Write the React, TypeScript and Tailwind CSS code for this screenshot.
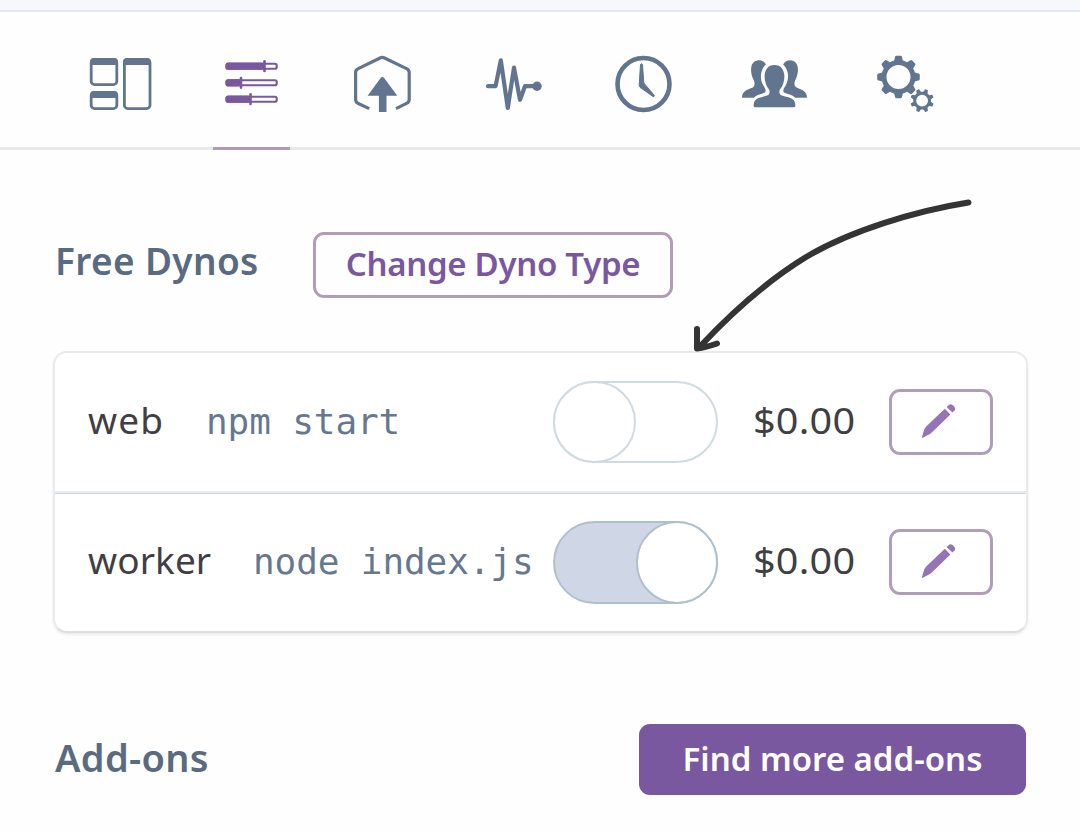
import type { ReactNode } from "react";

const SLATE = "#62758f";
const PURPLE = "#79589f";

function TabIcon({ x, children }: { x: number; children: ReactNode }) {
  return (
    <svg width="77" height="90" viewBox={`${x} 40 77 90`} fill="none" className="block">
      {children}
    </svg>
  );
}

function gearPath(cx: number, cy: number, outer: number, body: number, hole: number, offset: number) {
  const pt = (r: number, deg: number) => {
    const a = (deg * Math.PI) / 180;
    return `${(cx + r * Math.cos(a)).toFixed(2)} ${(cy + r * Math.sin(a)).toFixed(2)}`;
  };
  let d = "";
  for (let i = 0; i < 8; i++) {
    const c = offset + i * 45;
    d += `${i ? "L" : "M"}${pt(body, c - 15)}L${pt(outer - 1.4, c - 10)}Q${pt(outer, c - 9.5)} ${pt(outer, c - 6)}L${pt(outer, c + 6)}Q${pt(outer, c + 9.5)} ${pt(outer - 1.4, c + 10)}L${pt(body, c + 15)}A${body} ${body} 0 0 1 ${pt(body, c + 30)}`;
  }
  return `${d}ZM${cx - hole} ${cy}a${hole} ${hole} 0 1 0 ${hole * 2} 0a${hole} ${hole} 0 1 0 ${-hole * 2} 0Z`;
}

function Overview() {
  return (
    <TabIcon x={82}>
      <g stroke={SLATE} strokeWidth="2.8">
        <rect x="91.2" y="59.4" width="25.6" height="25.2" rx="3.4" />
        <rect x="91.2" y="92.4" width="25.6" height="16.2" rx="3.4" />
        <rect x="124.4" y="59.4" width="25.6" height="49.2" rx="3.4" />
      </g>
      <path fill={SLATE} d="M90 65v-3q0-4 4-4h20q4 0 4 4v3zM90 98v-3q0-4 4-4h20q4 0 4 4v3zM123 65v-3q0-4 4-4h20q4 0 4 4v3z" />
    </TabIcon>
  );
}

function Resources() {
  const rows = [
    { y: 66.2, k: 264.5 },
    { y: 82.8, k: 241 },
    { y: 99.2, k: 250.5 },
  ];
  return (
    <TabIcon x={213}>
      {rows.map(({ y, k }) => (
        <g key={y}>
          <rect x="226.5" y={y - 2.5} width="50.2" height="5" rx="1.8" stroke={PURPLE} strokeWidth="2.1" />
          <rect x="225.5" y={y - 3.6} width={k - 225.5} height="7.2" rx="2.5" fill={PURPLE} />
          <path d={`M${k} ${y - 4.8}v9.6`} stroke={PURPLE} strokeWidth="2.6" strokeLinecap="round" />
        </g>
      ))}
    </TabIcon>
  );
}

function Deploy() {
  return (
    <TabIcon x={344}>
      <path
        d="M369.2 108.6L357.8 103.2Q355.6 102 355.6 99.5V72.5Q355.6 70 357.8 68.8L380 58Q382.3 56.7 384.6 58L407 68.8Q409.2 70 409.2 72.5V99.5Q409.2 102 407 103.2L396 108.6"
        stroke={SLATE}
        strokeWidth="3.2"
      />
      <path fill={SLATE} d="M381 77.6q1.4-1.3 2.8 0L397.3 95.7H386.5V112h-7.6V95.7H367.6z" />
    </TabIcon>
  );
}

function Metrics() {
  return (
    <TabIcon x={475}>
      <path d="M488 86.2h7.6L500.8 60.3L507.8 108L514 67.6L520 99.8L525 86.2h12" stroke={SLATE} strokeWidth="4.2" strokeLinecap="round" strokeLinejoin="round" />
      <circle cx="537" cy="86.3" r="4.7" fill={SLATE} />
    </TabIcon>
  );
}

function Activity() {
  return (
    <TabIcon x={606}>
      <circle cx="643.5" cy="84" r="26" stroke={SLATE} strokeWidth="4.6" />
      <path fill={SLATE} stroke={SLATE} strokeWidth="1" strokeLinejoin="round" d="M640.5 64.5q1-1.6 2 0L643.8 83L654.4 95.5q.1 1.2-1.4 1L640 87.3q-.9-.8-.8-2.3z" />
    </TabIcon>
  );
}

function Access() {
  const side =
    "M765.8 64.4C763.6 59.6 756 58.6 752.8 63.3C749.9 67.2 751 74.6 753.2 79.1C755.3 83.5 755.2 86.6 751.4 88.1C746.6 89.9 741.9 91.9 742 97.8H753.8C756.3 94.9 760.3 94.3 764 93C767 91.6 765.3 88.5 763.4 85.5C759.2 78.4 760.5 69.5 765.8 64.4Z";
  const center =
    "M774.5 65C768.1 65 764.6 69.7 764.6 76.6C764.6 81.4 766.2 86.5 768.9 89.3C770 90.6 769.8 94.3 768.2 95.1C763.7 97.7 753.5 96.1 753.6 105.8Q753.7 107.3 755.5 107.3H793.5Q795.3 107.3 795.4 105.8C795.5 96.1 785.3 97.7 780.8 95.1C779.2 94.3 779 90.6 780.1 89.3C782.8 86.5 784.4 81.4 784.4 76.6C784.4 69.7 780.9 65 774.5 65Z";
  return (
    <TabIcon x={737}>
      <path fill={SLATE} d={side} />
      <path fill={SLATE} d={side} transform="translate(1549 0) scale(-1 1)" />
      <path fill={SLATE} d={center} />
    </TabIcon>
  );
}

function Settings() {
  return (
    <TabIcon x={868}>
      <path fill={SLATE} fillRule="evenodd" d={gearPath(898.5, 77, 21.4, 17, 12, 0)} />
      <path fill={SLATE} fillRule="evenodd" d={gearPath(922.1, 100.6, 11.8, 8.9, 5.9, 22.5)} />
    </TabIcon>
  );
}

function Toggle({ on }: { on: boolean }) {
  return (
    <button
      aria-pressed={on}
      className={
        on
          ? "flex h-[83px] w-[165px] shrink-0 justify-end rounded-full border-2 border-[#b0bfd0] bg-[#cfd6e6]"
          : "flex h-[82px] w-[165px] shrink-0 justify-start rounded-full border-2 border-[#d1dadf] bg-white"
      }
    >
      <span
        className={
          on
            ? "-my-0.5 -mr-0.5 h-[83px] w-[82px] rounded-full border-2 border-[#b0bfd0] bg-white"
            : "-my-0.5 -ml-0.5 h-[82px] w-[83px] rounded-full border-2 border-[#d1dadf] bg-white"
        }
      />
    </button>
  );
}

function EditButton() {
  return (
    <button className="flex h-[66px] w-[104px] shrink-0 items-center justify-center rounded-[11px] border-[3px] border-[#b09dbb]">
      <svg width="40" height="40" viewBox="921 402 40 40" fill="#9474b4" className="block">
        <path d="M921.8 437.5L924.2 429.6Q925 427.6 926.2 426.4L944.8 408.8L950.4 414.5L931.8 432.6Q930.5 434 928.5 434.8L922.8 437.7Q921.8 438 921.8 437.5Z" />
        <path d="M946.6 407L949.2 404.7Q950.8 403.4 953.2 405.6Q955.8 408 955 410L952.4 412.6Z" />
      </svg>
    </button>
  );
}

type Dyno = { name: string; command: string; on: boolean };

function DynoRow({ name, command, on }: Dyno) {
  return (
    <div className="flex h-[140px] items-center pr-[33px] pl-[33px]">
      <div className="flex w-[465px] shrink-0 items-baseline pb-1 whitespace-nowrap">
        <span className={name === "web" ? "w-[118px] text-[37px] tracking-[1.1px] text-[#3f3f44]" : "w-[165px] text-[37px] tracking-[0.1px] text-[#3f3f44]"}>{name}</span>
        <span className="font-['DejaVu_Sans_Mono',monospace] text-[36px] tracking-[-0.1px] text-[#667890]">{command}</span>
      </div>
      <Toggle on={on} />
      <span className="w-[171px] shrink-0 pb-1 pl-[35px]">
        <span className="inline-block origin-left scale-x-[1.07] text-[37px] tracking-[0.2px] text-[#3f3f44]">$0.00</span>
      </span>
      <EditButton />
    </div>
  );
}

export default function App() {
  return (
    <div className="relative h-[832px] w-[1080px] overflow-hidden bg-[#fefefe] font-['Noto_Sans',sans-serif]">
      <div className="h-3 border-b-2 border-[#e6e8f1] bg-[#f7f8fb]" />
      <nav className="flex h-[138px] gap-[54px] border-b-[3px] border-[#e7e9ee] pt-7 pl-[82px]">
        <Overview />
        <div className="h-[110px] border-b-[3px] border-[#ab9bb6]">
          <Resources />
        </div>
        <Deploy />
        <Metrics />
        <Activity />
        <Access />
        <Settings />
      </nav>

      <section className="pt-[82px]">
        <div className="flex h-[66px] items-center pl-[55px]">
          <h2 className="w-[258px] pb-2.5 text-[37px] leading-none font-semibold tracking-[0.35px] whitespace-nowrap text-[#5a6b80]">Free Dynos</h2>
          <button className="flex h-[66px] w-[360px] items-center justify-center rounded-[11px] border-[3px] border-[#b09dbb] pb-0.5 text-[33px] font-semibold tracking-[-0.3px] whitespace-nowrap text-[#79589f]">
            Change Dyno Type
          </button>
        </div>
        <div className="mt-[53px] ml-[53px] h-[282px] w-[975px] rounded-[14px] border-2 border-[#e8eaec] border-b-[#dcdfe2] bg-white shadow-[0_2px_3px_rgba(0,0,0,0.07)]">
          <div className="-mt-px">
            <DynoRow name="web" command="npm start" on={false} />
          </div>
          <div className="-mt-px -mb-0.5 h-[3px] border-b border-[#cbd8df] bg-[#e9ecee]" />
          <DynoRow name="worker" command="node index.js" on />
        </div>
      </section>

      <section className="mt-[91px] flex items-center justify-between pr-[54px] pl-[55px]">
        <h2 className="pb-1.5 text-[38px] leading-none font-semibold tracking-[0.3px] text-[#5a6b80]">Add-ons</h2>
        <button className="flex h-[71px] w-[387px] items-center justify-center rounded-[11px] bg-[#79589f] pb-0.5 text-[33px] font-semibold whitespace-nowrap text-white">
          Find more add-ons
        </button>
      </section>

      <svg className="pointer-events-none absolute top-[190px] left-[680px]" width="310" height="170" viewBox="680 190 310 170" fill="none">
        <path d="M968.5 202.5C915 211 850 231 807 256.5C770 279 735 309 700 346.5M697 329V348.5Q706 347.5 717 343.5" stroke="#343434" strokeWidth="6" strokeLinejoin="round" strokeLinecap="round" />
      </svg>
    </div>
  );
}
